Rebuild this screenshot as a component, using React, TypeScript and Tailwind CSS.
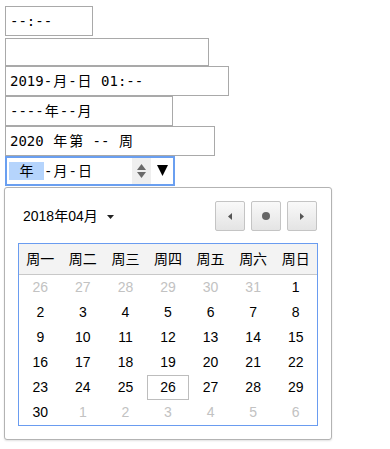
import React from "react";

const mono = { fontFamily: '"DejaVu Sans Mono", "Noto Sans CJK SC", monospace' };

function Txt({ s }: { s: string }) {
  const parts: React.ReactNode[] = [];
  let buf = "";
  Array.from(s).forEach((ch, i) => {
    if (/[\u4e00-\u9fff]/.test(ch)) {
      if (buf) {
        parts.push(<span key={"b" + i} className="whitespace-pre">{buf}</span>);
        buf = "";
      }
      parts.push(
        <span key={"c" + i} className="inline-block w-[16px] text-center">
          {ch}
        </span>
      );
    } else buf += ch;
  });
  if (buf) parts.push(<span key="end" className="whitespace-pre">{buf}</span>);
  return <>{parts}</>;
}

function Field({ w, h, s }: { w: string; h: string; s?: string }) {
  return (
    <div className={`${w} ${h} border border-[#a9a9a9] flex items-center pl-[4px] text-[14px] text-black`} style={mono}>
      {s ? <Txt s={s} /> : null}
    </div>
  );
}

const prevDays = ["26", "27", "28", "29", "30", "31"];
type Cell = { d: string; muted: boolean; sel?: boolean };

function buildCells(): Cell[] {
  const cells: Cell[] = prevDays.map((d) => ({ d, muted: true }));
  for (let i = 1; i <= 30; i++) cells.push({ d: String(i), muted: false, sel: i === 26 });
  for (let i = 1; i <= 6; i++) cells.push({ d: String(i), muted: true });
  return cells;
}

export default function App() {
  const cells = buildCells();
  const weeks = ["周一", "周二", "周三", "周四", "周五", "周六", "周日"];
  return (
    <div className="w-[390px] h-[449px] bg-white pt-[6px] relative">
      <div className="pl-[5px] flex flex-col">
        <Field w="w-[88px]" h="h-[30px]" s="--:--" />
        <div className="h-[2px]" />
        <Field w="w-[204px]" h="h-[28px]" />
        <Field w="w-[224px]" h="h-[30px]" s="2019-月-日 01:--" />
        <Field w="w-[168px]" h="h-[30px]" s="----年--月" />
        <Field w="w-[210px]" h="h-[30px]" s="2020 年第 -- 周" />
        <div
          className="w-[170px] h-[30px] border-2 border-[#6a9ff0] flex items-center text-[14px] text-black relative"
          style={mono}
        >
          <span className="ml-[2px] w-[35px] h-[18px] bg-[#b5d4fc] flex items-center justify-center">年</span>
          <span className="whitespace-pre">-</span>
          <span className="inline-block w-[16px] text-center">月</span>
          <span className="whitespace-pre">-</span>
          <span className="inline-block w-[16px] text-center">日</span>
          <div className="absolute left-[125px] top-0 w-[19px] h-[26px] bg-[#efefef] flex flex-col items-center justify-center gap-[2px]">
            <svg width="9" height="6" viewBox="0 0 9 6"><path d="M4.5 0 L9 6 L0 6 Z" fill="#6a6a6a" /></svg>
            <svg width="9" height="6" viewBox="0 0 9 6"><path d="M0 0 L9 0 L4.5 6 Z" fill="#6a6a6a" /></svg>
          </div>
          <svg className="absolute left-[150px] top-[7px]" width="11" height="11" viewBox="0 0 11 11"><path d="M0 0 L11 0 L5.5 11 Z" fill="#000" /></svg>
        </div>
      </div>
      <div
        className="ml-[4px] mt-px w-[328px] border border-[#b3b3b3] rounded-[3px] bg-white px-[13px] pt-[13px] pb-[13px] shadow-[0_1px_2px_rgba(0,0,0,0.12)]"
        style={{ fontFamily: '"Liberation Sans", Arial, "Noto Sans CJK SC", sans-serif' }}
      >
        <div className="flex items-center justify-between h-[30px]">
          <div className="flex items-center pl-[5px] text-[14px] text-black">
            <span>2018年04月</span>
            <svg className="ml-[9px] mt-[1px]" width="7" height="4" viewBox="0 0 7 4"><path d="M0 0 L7 0 L3.5 4 Z" fill="#222" /></svg>
          </div>
          <div className="flex gap-[6px] mr-[1px]">
            {[0, 1, 2].map((i) => (
              <div
                key={i}
                className="w-[30px] h-[30px] rounded-[2px] border border-[#c4c4c4] bg-gradient-to-b from-[#f9f9f9] to-[#e4e4e4] flex items-center justify-center"
              >
                {i === 0 && (
                  <svg width="4" height="7" viewBox="0 0 4 7"><path d="M4 0 L4 7 L0 3.5 Z" fill="#555" /></svg>
                )}
                {i === 1 && <div className="w-[8px] h-[8px] rounded-full bg-[#666]" />}
                {i === 2 && (
                  <svg width="4" height="7" viewBox="0 0 4 7"><path d="M0 0 L4 3.5 L0 7 Z" fill="#555" /></svg>
                )}
              </div>
            ))}
          </div>
        </div>
        <div className="mt-[12px] border border-[#6a9cf0] text-[14px]">
          <div className="grid grid-cols-7 h-[31px] bg-[#f3f3f3] border-b border-[#c8c8c8] items-center text-black">
            {weeks.map((w) => (
              <div key={w} className="text-center">{w}</div>
            ))}
          </div>
          <div className="grid grid-cols-7">
            {cells.map((c, i) => (
              <div
                key={i}
                className={`h-[25px] flex items-center justify-center ${c.muted ? "text-[#c2c2c2]" : "text-black"} ${c.sel ? "border border-[#bdbdbd]" : ""}`}
              >
                {c.d}
              </div>
            ))}
          </div>
        </div>
      </div>
    </div>
  );
}
